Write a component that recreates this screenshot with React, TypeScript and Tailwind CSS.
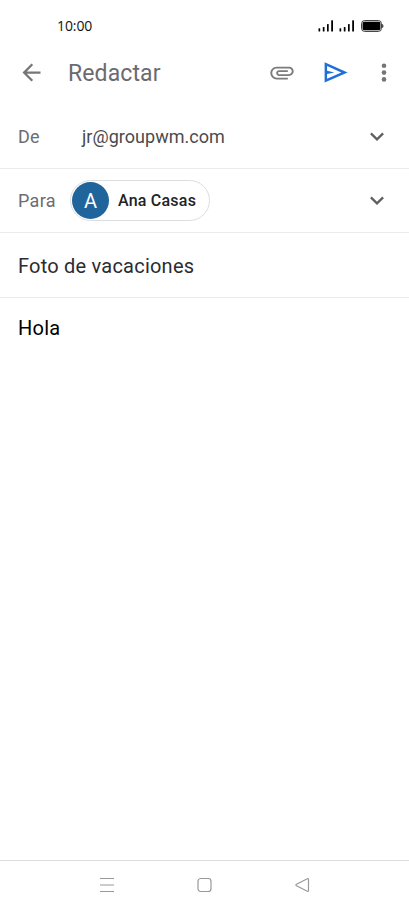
import type { ReactNode } from "react";

function Signal() {
  return (
    <svg width="16" height="12" viewBox="0 0 16 12" fill="#000">
      <rect x="0.5" y="8.3" width="1.7" height="3.3" rx="0.5" />
      <rect x="4.8" y="7" width="1.7" height="4.6" rx="0.5" />
      <rect x="9" y="4" width="1.7" height="7.6" rx="0.5" />
      <rect x="13.2" y="0.2" width="1.8" height="11.4" rx="0.5" />
    </svg>
  );
}

function Battery() {
  return (
    <svg width="23" height="12" viewBox="0 0 23 12">
      <rect x="0.6" y="0.6" width="19.8" height="10.8" rx="3" fill="none" stroke="#333" strokeWidth="1" />
      <rect x="1.6" y="1.7" width="17.8" height="8.6" rx="1.8" fill="#000" />
      <path d="M21.2 4v4c.8-.3 1.2-1 1.2-2s-.4-1.7-1.2-2z" fill="#222" />
    </svg>
  );
}

function Chevron() {
  return (
    <svg width="14" height="9" viewBox="0 0 14 9" fill="none" stroke="#5f6063" strokeWidth="2.3">
      <path d="M0.9 1.4 7 7.4l6.1-6" />
    </svg>
  );
}

function Row({ label, children }: { label: string; children: ReactNode }) {
  return (
    <div className="flex h-[64px] items-center border-b border-[#ebebed] pl-[18px] pr-[25px]">
      <span className="w-[52px] text-[18px] tracking-[0.3px] text-[#6b6d71]">{label}</span>
      {children}
      <div className="ml-auto">
        <Chevron />
      </div>
    </div>
  );
}

export default function App() {
  return (
    <div className="flex h-[910px] w-[409px] flex-col overflow-hidden bg-white font-[Roboto,sans-serif]">
      <div className="flex h-[40px] items-center pl-[57px] pr-[25px] pt-[11px]">
        <span className="font-['Open_Sans',sans-serif] text-[14px] tracking-[-0.1px] text-[#111]">10:00</span>
        <div className="ml-auto flex items-center">
          <Signal />
          <span className="w-[5px]" />
          <Signal />
          <span className="w-[6px]" />
          <Battery />
        </div>
      </div>

      <header className="flex h-[65px] items-center pl-[18px] pr-[21px]">
        <svg width="27" height="27" viewBox="0 0 24 24" fill="#757678">
          <path d="M20 11H7.83l5.59-5.59L12 4l-8 8 8 8 1.41-1.41L7.83 13H20v-2z" />
        </svg>
        <h1 className="ml-[23px] pt-[3px] text-[23px] tracking-[0.1px] text-[#696b6f]">Redactar</h1>
        <div className="ml-auto flex items-center">
          <svg width="28" height="28" viewBox="0 0 24 24" fill="#7b7b7b">
            <path d="M2 12.1C2 9.06 4.46 6.6 7.5 6.6H18c2.21 0 4 1.79 4 4s-1.79 4-4 4H9.5C8.12 14.6 7 13.48 7 12.1S8.12 9.6 9.5 9.6H17v1.6H9.41c-1 0-1 1.8 0 1.8H18c1.3 0 2.4-1.1 2.4-2.4s-1.1-2.4-2.4-2.4H7.5c-2.15 0-3.9 1.75-3.9 3.9S5.35 16 7.5 16H17v1.6H7.5C4.46 17.6 2 15.14 2 12.1z" />
          </svg>
          <svg className="ml-[25px]" width="29" height="29" viewBox="0 0 24 24" fill="#1f6fd8">
            <path d="M3 20.2V3.6L22 11.9 3 20.2Zm2-3.1L16.85 11.9 5 6.7v3.9l6 1.3-6 1.3v3.9Z" />
          </svg>
          <svg className="ml-[30px]" width="8" height="20" viewBox="0 0 8 20" fill="#757575">
            <circle cx="4" cy="2.8" r="2.3" />
            <circle cx="4" cy="9.6" r="2.3" />
            <circle cx="4" cy="16.4" r="2.3" />
          </svg>
        </div>
      </header>

      <main className="flex-1">
        <Row label="De">
          <span className="ml-[12px] text-[18px] tracking-[0.03px] text-[#4a4b4e]">jr@groupwm.com</span>
        </Row>
        <Row label="Para">
          <div className="flex h-[41px] w-[140px] items-center rounded-full border border-[#dcdde0] pl-[1px]">
            <span className="flex size-[37px] items-center justify-center rounded-full bg-[#1f659c] text-[20px] text-white">
              A
            </span>
            <span className="ml-[9px] whitespace-nowrap text-[16px] font-medium tracking-[0.22px] text-[#222326]">
              Ana Casas
            </span>
          </div>
        </Row>
        <div className="flex h-[65px] items-center border-b border-[#ebebed] pl-[18px] pt-[2px] text-[20px] tracking-[0.22px] text-[#2b2c2f]">
          Foto de vacaciones
        </div>
        <p className="pl-[18px] pt-[15px] text-[20px] leading-[30px] tracking-[0.25px] text-black">Hola</p>
      </main>

      <nav className="flex h-[50px] items-center justify-between border-t border-[#dcdcdc] px-[99px] pb-[2px]">
        <svg width="16" height="16" viewBox="0 0 16 16" stroke="#999" strokeWidth="1.2">
          <path d="M1 1.5h14M1 8h14M1 14.5h14" />
        </svg>
        <svg width="16" height="16" viewBox="0 0 16 16" fill="none" stroke="#999" strokeWidth="1.2">
          <rect x="1" y="1.5" width="13" height="13" rx="2.8" />
        </svg>
        <svg width="16" height="16" viewBox="0 0 16 16" fill="none" stroke="#999" strokeWidth="1.2">
          <path d="M2.5 7.2 13.3 1.8q1.2-.4 1.2.8v10.8q0 1.2-1.2.8L2.5 8.8q-1.2-.8 0-1.6z" />
        </svg>
      </nav>
    </div>
  );
}
